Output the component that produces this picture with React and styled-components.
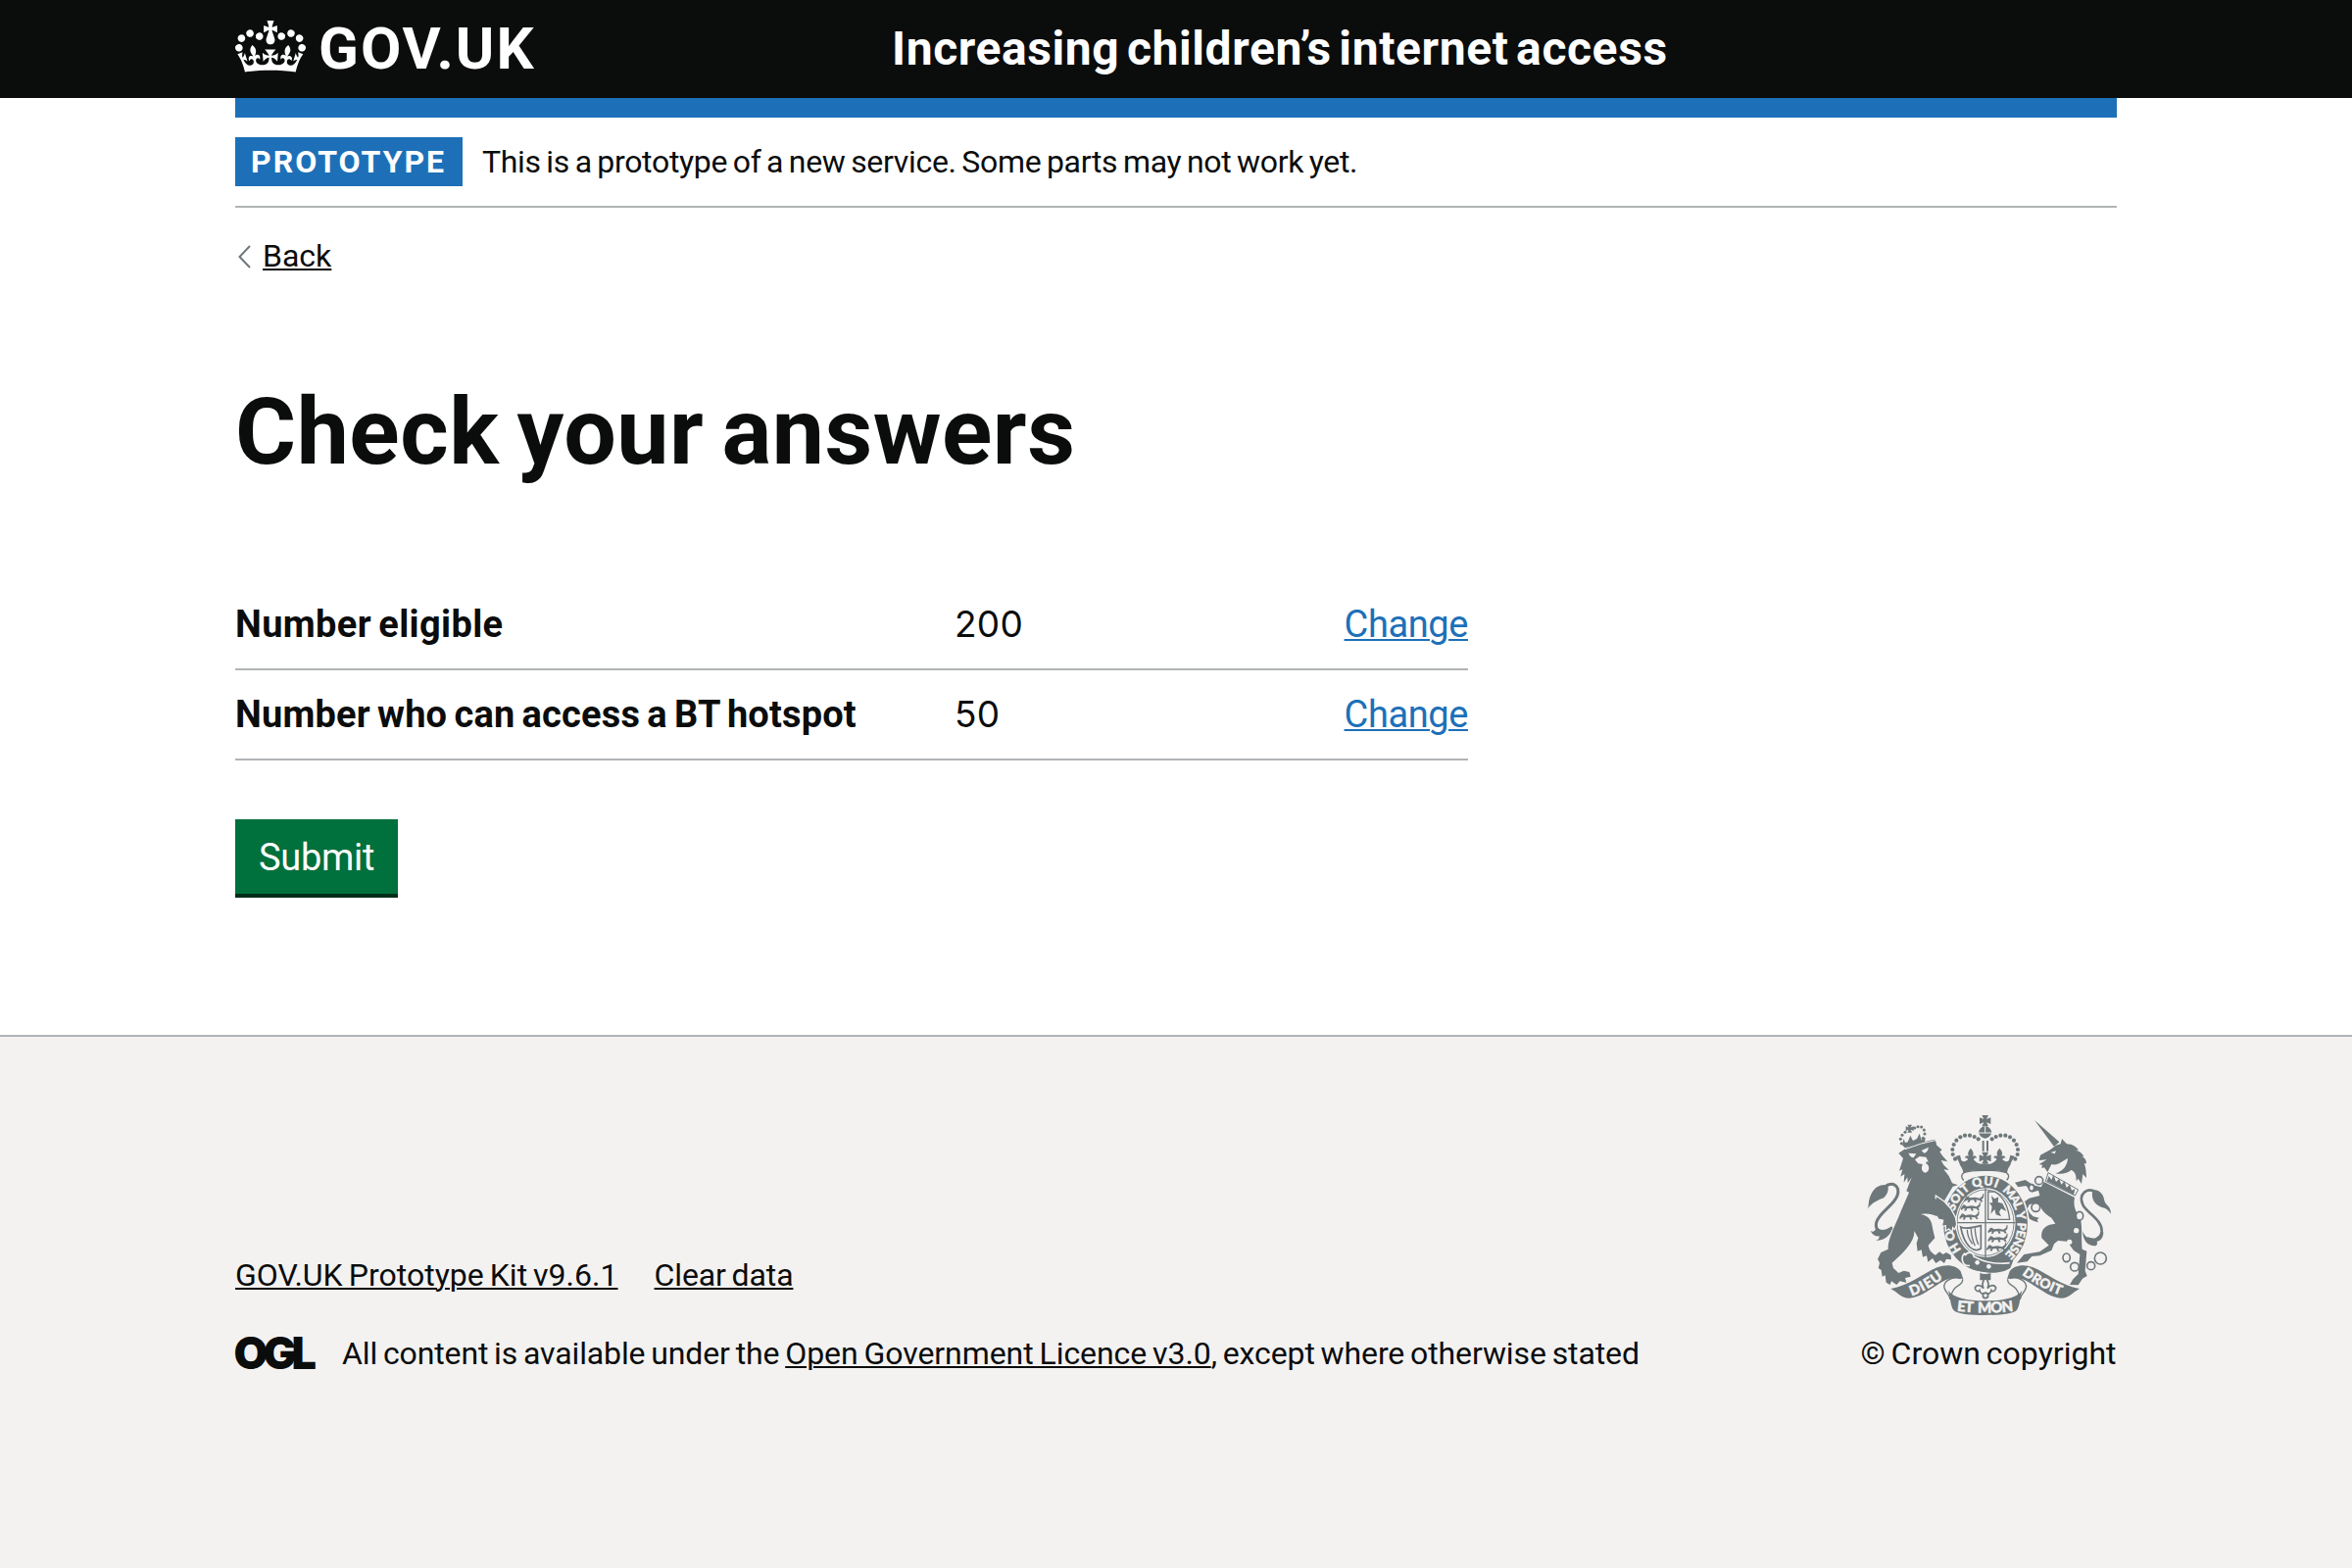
import React from "react";
import styled, { createGlobalStyle } from "styled-components";

const ink = "#0b0c0c";
const blue = "#1d70b8";
const rule = "#b1b4b6";
const shade = "#f3f2f1";
const heraldic = "#6e777a";

const GlobalStyle = createGlobalStyle`
  *, *::before, *::after { box-sizing: border-box; }
  body {
    margin: 0;
    background: #fff;
    color: ${ink};
    font-family: Roboto, "Liberation Sans", sans-serif;
    font-size: 32px;
    line-height: 40px;
    -webkit-font-smoothing: antialiased;
  }
`;

const Page = styled.div`
  display: flex;
  flex-direction: column;
  min-height: 100vh;
`;

const Container = styled.div`
  width: 1920px;
  margin: 0 auto;
`;

/* Fine tracking of a run of text: $track for letters, $words for spaces. */
const Run = styled.span`
  white-space: pre;
  letter-spacing: ${(p) => p.$track || 0}px;
  word-spacing: ${(p) => (p.$words === undefined ? -2 : p.$words)}px;
`;

const Link = styled.a`
  white-space: pre;
  color: ${(p) => p.$color || ink};
  letter-spacing: ${(p) => p.$track || 0}px;
  word-spacing: -2px;
  text-decoration: underline;
  text-decoration-thickness: 2px;
  text-underline-offset: 2px;
`;

const Header = styled.header`
  background: ${ink};
  color: #fff;
`;

const HeaderRow = styled(Container)`
  display: grid;
  grid-template-columns: 670px 1fr;
  align-items: center;
  height: 100px;
`;

const Brand = styled.a`
  display: flex;
  align-items: center;
  gap: 13px;
  color: #fff;
`;

const CrownMark = styled.svg`
  width: 72px;
  height: 53px;
  margin-bottom: 5px;
`;

const Wordmark = styled.span`
  font-size: 60px;
  line-height: 60px;
  font-weight: 700;
  letter-spacing: 2px;
`;

const ServiceName = styled.a`
  font-size: 48px;
  line-height: 60px;
  font-weight: 700;
`;

const BlueBar = styled(Container)`
  height: 20px;
  background: ${blue};
`;

const PhaseBanner = styled(Container)`
  display: flex;
  align-items: center;
  gap: 20px;
  height: 92px;
  padding: 20px 0;
  border-bottom: 2px solid ${rule};
`;

const Tag = styled.strong`
  width: 232px;
  padding-left: 16px;
  background: ${blue};
  color: #fff;
  font-weight: 700;
  line-height: 50px;
  letter-spacing: 2px;
`;

const Main = styled(Container)`
  display: flex;
  flex-direction: column;
  align-items: flex-start;
  padding: 29px 0 144px;
`;

const BackLink = styled.div`
  display: flex;
  align-items: center;
  gap: 11px;
  padding-left: 3px;
`;

const Chevron = styled.svg`
  width: 14px;
  height: 26px;
`;

const Title = styled.h1`
  margin: 110px 0 101px;
  font-size: 95px;
  line-height: 100px;
  font-weight: 700;
`;

const SummaryList = styled.dl`
  width: 1258px;
  margin: 0 0 60px;
  font-size: 38px;
  line-height: 50px;
`;

const SummaryRow = styled.div`
  display: grid;
  grid-template-columns: 734px 1fr auto;
  padding: 20px 0;
  border-bottom: 2px solid ${rule};
`;

const Key = styled.dt`
  font-weight: 700;
`;

const Value = styled.dd`
  margin: 0;
  font-family: Inter, Roboto, sans-serif;
  font-size: 37px;
  letter-spacing: 0.3px;
`;

const Action = styled.dd`
  margin: 0;
`;

const SubmitButton = styled.button`
  width: 166px;
  height: 76px;
  padding: 1px 0 0;
  border: 0;
  background: #00703c;
  box-shadow: 0 4px 0 #002d18;
  color: #fff;
  font: 400 38px/50px Roboto, sans-serif;
  letter-spacing: -0.3px;
`;

const Footer = styled.footer`
  flex: 1;
  border-top: 2px solid ${rule};
  background: ${shade};
`;

const FooterRow = styled(Container)`
  display: flex;
  justify-content: space-between;
  align-items: flex-end;
  padding-top: 80px;
`;

const FooterText = styled.div`
  display: flex;
  flex-direction: column;
  gap: 40px;
`;

const FooterLinks = styled.nav`
  display: flex;
  gap: 37px;
`;

const Licence = styled.div`
  display: flex;
  align-items: center;
  gap: 27px;
`;

const LicenceMark = styled.svg`
  width: 82px;
  height: 36px;
  overflow: visible;
`;

const Copyright = styled.div`
  display: flex;
  flex-direction: column;
  align-items: center;
  gap: 19px;
  width: 262px;
`;

const Arms = styled.svg`
  width: 250px;
  height: 204px;
  overflow: visible;
`;

const answers = [
  { key: "Number eligible", value: "200", track: 0.35 },
  { key: "Number who can access a BT hotspot", value: "50", track: 0.17 },
];

function Crown() {
  return (
    <CrownMark viewBox="0 0 132 97" aria-hidden="true">
      <path
        fill="currentColor"
        fillRule="evenodd"
        d="M25 30.2c3.5 1.5 7.7-.2 9.1-3.7 1.5-3.6-.2-7.8-3.9-9.2-3.6-1.4-7.6.3-9.1 3.9-1.4 3.5.3 7.5 3.9 9zM9 39.5c3.6 1.5 7.8-.2 9.2-3.7 1.5-3.6-.2-7.8-3.9-9.1-3.6-1.5-7.6.2-9.1 3.8-1.4 3.5.3 7.5 3.8 9zM4.4 57.2c3.5 1.5 7.7-.2 9.1-3.8 1.5-3.6-.2-7.7-3.9-9.1-3.5-1.5-7.6.3-9.1 3.8-1.4 3.5.3 7.6 3.9 9.1zm38.3-21.4c3.5 1.5 7.7-.2 9.1-3.8 1.5-3.6-.2-7.7-3.9-9.1-3.6-1.5-7.6.3-9.1 3.8-1.3 3.6.4 7.7 3.9 9.1zm64.4-5.6c-3.6 1.5-7.8-.2-9.1-3.7-1.5-3.6.2-7.8 3.8-9.2 3.6-1.4 7.7.3 9.2 3.9 1.3 3.5-.4 7.5-3.9 9zm15.9 9.3c-3.6 1.5-7.7-.2-9.1-3.7-1.5-3.6.2-7.8 3.7-9.1 3.6-1.5 7.7.2 9.2 3.8 1.5 3.5-.3 7.5-3.8 9zm4.7 17.7c-3.6 1.5-7.8-.2-9.2-3.8-1.5-3.6.2-7.7 3.9-9.1 3.6-1.5 7.7.3 9.2 3.8 1.3 3.5-.4 7.6-3.9 9.1zM89.3 35.8c-3.6 1.5-7.8-.2-9.2-3.8-1.4-3.6.2-7.7 3.9-9.1 3.6-1.5 7.7.3 9.2 3.8 1.4 3.6-.3 7.7-3.9 9.1zM69.7 17.7l8.9 4.7V9.3l-8.9 2.8c-.2-.3-.5-.6-.9-.9L72.4 0H59.6l3.5 11.2c-.3.3-.6.5-.9.9l-8.8-2.8v13.1l8.8-4.7c.3.3.6.7.9.9l-5 15.4v.1c-.2.8-.4 1.6-.4 2.4 0 4.1 3.1 7.5 7 8.1h.2c.3 0 .7.1 1 .1.4 0 .7 0 1-.1h.2c4-.6 7.1-4.1 7.1-8.1 0-.8-.1-1.7-.4-2.4V34l-5.1-15.4c.4-.2.7-.6 1-.9zM66 92.8c16.9 0 32.8 1.1 47.1 3.2 4-16.9 8.9-26.7 14-33.5l-9.6-3.4c1 4.9 1.1 7.2 0 10.2-1.5-1.4-3-4.3-4.2-8.7L108.6 76c2.8-2 5-3.2 7.5-3.3-4.4 9.4-10 11.9-13.6 11.2-4.3-.8-6.3-4.6-5.6-7.9 1-4.7 5.7-5.9 8-.5 4.3-8.7-3-11.4-7.6-8.8 7.1-7.2 7.9-13.5 2.1-21.1-8 6.1-8.1 12.3-4.5 20.8-4.7-5.4-12.1-2.5-9.5 6.2 3.4-5.2 7.9-2 7.2 3.1-.6 4.3-6.4 7.8-13.5 7.2-10.3-.9-10.9-8-11.2-13.8 2.5-.5 7.1 1.8 11 7.3L80.2 60c-4.1 4.4-8 5.3-12.3 5.4 1.4-4.4 8-11.6 8-11.6H55.5s6.4 7.2 7.9 11.6c-4.2-.1-8-1-12.3-5.4l1.4 16.4c3.9-5.5 8.5-7.7 10.9-7.3-.3 5.8-.9 12.8-11.1 13.8-7.2.6-12.9-2.9-13.5-7.2-.7-5 3.8-8.3 7.1-3.1 2.7-8.7-4.6-11.6-9.4-6.2 3.7-8.5 3.6-14.7-4.6-20.8-5.8 7.6-5 13.9 2.2 21.1-4.7-2.6-11.9.1-7.7 8.8 2.3-5.5 7.1-4.2 8.1.5.7 3.3-1.3 7.1-5.7 7.9-3.5.7-9-1.8-13.5-11.2 2.5.1 4.7 1.3 7.5 3.3l-4.7-15.4c-1.2 4.4-2.7 7.2-4.3 8.7-1.1-3-.9-5.3 0-10.2l-9.5 3.4c5 6.9 9.9 16.7 14 33.5 14.8-2.1 30.8-3.2 47.7-3.2z"
      />
    </CrownMark>
  );
}

const archPearls = [
  [345, 188], [338, 174], [337, 159], [341, 144], [349, 131], [361, 121], [375, 116], [390, 116], [404, 120], [416, 127],
];

function CrossPatee({ x, y, s = 1 }) {
  return (
    <path
      transform={`translate(${x} ${y}) scale(${s})`}
      d="M-10-17H10L4-5 17-10V10L4 5 10 17H-10L-4 5-17 10V-10L-4-5Z"
    />
  );
}

function HalfCrown() {
  return (
    <g>
      {archPearls.map(([x, y]) => (
        <circle key={`${x}-${y}`} cx={x} cy={y} r="6.2" />
      ))}
      <path d="M393 155c-8 9-11 16-6 24-6-4-12 0-12 6 4-2 8 0 9 5-6 6-14 8-20 2l-4-16-14 4c6 8 11 16 14 26l8 14h70v-18c-14 4-26 0-36-12 1-5 4-7 9-5 0-6-6-10-12-6 4-8 2-15-6-24Z" />
      <path d="M367 216H438V222Q396 220 370 230Z" />
      <path d="M438 223Q396 222 372 230 358 240 372 254" fill="none" stroke={heraldic} strokeWidth="4" />
    </g>
  );
}

function HalfRibbon() {
  return (
    <g>
      <path d="M148 585C200 578 252 536 290 520 320 508 350 514 362 532L370 556C340 546 312 558 290 574 262 592 232 614 204 614 180 614 172 598 148 585Z" />
      <path
        d="M368 556C370 580 340 568 334 604M362 554C336 546 308 562 312 582 316 598 328 600 330 618"
        fill="none"
        stroke={heraldic}
        strokeWidth="4"
      />
      <path d="M324 590C338 612 380 622 438 622V666C392 666 350 662 340 650 332 640 330 612 324 590Z" />
    </g>
  );
}

/* A small walking lion for the quarterings. */
function Passant({ x, y }) {
  return (
    <path
      transform={`translate(${x} ${y})`}
      d="M0 4L4-2 10-1 14 3 30 1 44 4 52-2 54-10 57-9 56 2 50 8 54 14 49 16 44 10 32 9 36 15 30 17 26 9 16 10 12 17 6 16 10 10 4 10-2 15-4 10Z"
    />
  );
}

function CoatOfArms() {
  return (
    <Arms viewBox="72 54 750 612" fill={heraldic} aria-hidden="true">
      <defs>
        <path id="motto" d="M437 503A99 117 0 0 1 338 386A99 117 0 0 1 437 269A99 117 0 0 1 536 386A99 117 0 0 1 437 503" />
        <path id="scroll-left" d="M212 607Q262 590 316 547" />
        <path id="scroll-right" d="M549 541Q606 584 674 607" />
        <path id="scroll-mid" d="M350 653Q437 664 525 653" />
      </defs>

      {/* royal crown */}
      <CrossPatee x="437" y="71" />
      <path d="M417 108c2-12 8-19 20-20 12 1 18 8 20 20-3 9-10 15-20 17-10-2-17-8-20-17Z" />
      <path d="M415 108h44M437 88v20" stroke={shade} strokeWidth="3" />
      <path d="M431 132v32M444 132v32" stroke={heraldic} strokeWidth="6" />
      <CrossPatee x="437" y="185" s={1.05} />
      <HalfCrown />
      <g transform="translate(874) scale(-1 1)">
        <HalfCrown />
      </g>

      {/* lion */}
      <g>
        {[[181, 140], [178, 127], [183, 115], [192, 106], [221, 93], [231, 89], [242, 90], [250, 99], [252, 111], [247, 124]].map(([x, y]) => (
          <circle key={`${x}-${y}`} cx={x} cy={y} r="4.6" />
        ))}
        <CrossPatee x="206" y="95" s={0.7} />
        <path d="M186 142l-4 2 10 10 60-18 2-14-8 4-4 4-6-20-8 16-12 6-8-16-8 20-8 2-4-12-4 14Z" />
        <path d="M190 158C216 142 250 134 284 128L289 146 305 160 298 166 306 178 322 196 302 192 310 206 326 222 310 220 326 240 336 262 354 268 338 272 312 316 330 332 344 352 350 376 346 404 336 412 328 402 318 408 318 388 308 392 310 374 300 374 299 352 290 364C276 356 262 354 240 357 266 362 274 378 276 400L283 430 263 452C266 468 274 476 285 482L297 472 308 480 318 474 332 482 333 496 318 494 312 507 300 498 286 507 276 492 262 503 258 484 246 488 242 466 230 470 227 446 232 430 220 408C222 440 188 474 152 506L156 522 172 537 188 530 205 534 209 548 192 552 196 566 176 562 166 573 150 562 146 573 134 566 131 544 122 548 119 528 110 522 114 506 108 494 118 474 140 464C138 434 160 396 178 350L204 290 196 286 212 244 200 262 199 244 188 260 190 234 178 242 184 220 174 224 186 186 172 170Z" />
        <g fill={shade}>
          <path d="M202 170l24 2-8 12c-8 0-12-6-16-14ZM242 162l22-10c-2 10-6 16-14 18Z" />
          <path d="M222 190l14-10 20 2 8 16c-6-4-8-2-8 4 12 4 12 26-2 28-12-2-14-16-8-26l-14-2Z" />
        </g>
        <path d="M192 158q50-20 96-28" fill="none" stroke={shade} strokeWidth="3" />
        <path d="M72 346c6-8 8-12 8-20 2-24 12-42 26-52 10-6 22-8 32-6 6 10 0 32-14 40-20 6-38 18-52 38Z" />
        <path
          d="M128 274C154 254 178 270 168 300 158 330 112 352 104 382 98 410 122 418 152 398"
          fill="none"
          stroke={heraldic}
          strokeWidth="9"
        />
        <path d="M86 408c8 4 12 2 16-6 16 10 34 6 52-8-4 22-16 42-52 44 10-4 12-8 10-14-12 2-20-4-26-16Z" />
      </g>

      {/* unicorn */}
      <g>
        <path d="M588 69L664 136 648 150Z" />
        <path d="M672 126L687 142C706 142 716 152 723 160L714 162C728 164 734 172 739 180L732 180C744 184 747 194 747 202L740 202C746 214 746 230 747 246L736 234 732 264 722 248 716 256C716 236 712 226 700 222 688 232 672 236 652 232 676 226 688 208 690 186 672 194 660 210 640 204L628 228 618 214 610 216 612 206 602 204 626 190 602 192 606 176 636 160 654 146 668 142Z" />
        <path d="M638 168l16-5-4 9z" fill={shade} />
        <path d="M630 230L722 282 712 300 622 256Z" fill="none" stroke={heraldic} strokeWidth="3" />
        <path d="M626 256L632 240 640 252 646 236 654 258 664 248 670 266 680 256 686 276 696 266 702 284 712 280 708 298Z" />
        <path d="M617 258L711 306C706 330 712 350 728 366 736 400 730 430 734 464L748 470 743 530 749 546 735 554 722 574 696 573 706 556 722 540 727 480 708 468 688 440 660 438 648 448 640 468 604 484 580 486 566 502 534 506 556 480 604 472 632 452 610 430C606 402 624 388 652 386L640 368C620 356 610 344 606 332 596 324 584 322 572 328L566 340 574 354 584 364 602 368 596 374 600 382 586 378 574 372 556 352 546 326 572 308 604 300 600 284 580 290 562 270 538 274 528 260 560 252 584 268 608 274Z" />
        <path d="M776 290C748 272 722 296 736 328 746 352 794 372 794 408 792 434 770 440 748 430" fill="none" stroke={heraldic} strokeWidth="8" />
        <path d="M766 282c22 0 34 14 36 34 4 14 20 16 20 40-8-12-16-18-28-20-22-8-34-26-28-54ZM735 408c6 16 18 26 34 28l30-26c0 18-8 28-20 30 2 6 2 10-4 14-22 0-38-12-40-46Z" />
        <g fill={shade}>
          <circle cx="716" cy="407" r="8" />
          <circle cx="695" cy="442" r="8" />
        </g>
        <g fill={shade} stroke={heraldic} strokeWidth="5">
          <circle cx="602" cy="254" r="12" />
          <ellipse cx="579" cy="276" rx="8" ry="10" />
          <circle cx="592" cy="336" r="13" />
          <ellipse cx="726" cy="362" rx="11" ry="13" />
        </g>
        <g fill="none" stroke={heraldic} strokeWidth="5">
          <ellipse cx="686" cy="490" rx="11" ry="13" />
          <circle cx="711" cy="518" r="13" />
          <circle cx="761" cy="515" r="12" />
          <circle cx="790" cy="492" r="18" />
        </g>
      </g>

      {/* garter */}
      <ellipse cx="438" cy="386" rx="134" ry="152" fill={shade} />
      <ellipse cx="438" cy="386" rx="129" ry="147" />
      <ellipse cx="438" cy="383" rx="92" ry="106" fill={shade} />
      <ellipse cx="438" cy="383" rx="87" ry="101" fill="none" stroke={heraldic} strokeWidth="2.5" />
      <g fill={shade} stroke={shade} strokeWidth="1.4" fontFamily="Lato, sans-serif" fontWeight="900" fontSize="37">
        <text><textPath href="#motto" startOffset="84" textLength="66">HO</textPath></text>
        <text><textPath href="#motto" startOffset="208" textLength="84">SOIT</textPath></text>
        <text><textPath href="#motto" startOffset="302" textLength="74">QUI</textPath></text>
        <text><textPath href="#motto" startOffset="394" textLength="74">MAL</textPath></text>
        <text><textPath href="#motto" startOffset="474">Y</textPath></text>
        <text><textPath href="#motto" startOffset="506" textLength="108">PENSE</textPath></text>
      </g>

      {/* quarterings */}
      <path d="M438 277v212M346 383h184" stroke={heraldic} strokeWidth="4" />
      <Passant x={376} y={304} />
      <Passant x={366} y={330} />
      <Passant x={362} y={357} />
      <Passant x={449} y={400} />
      <Passant x={449} y={426} />
      <Passant x={445} y={453} />
      <path d="M446 288H466C494 304 508 336 512 373H446Z" fill="none" stroke={heraldic} strokeWidth="4" />
      <path d="M456 300l10 10 12-6-2 16 14 4 12 24-16-8-6 10 6 14-16-6-4-16-12 14 4-22-8-12 10 0Z" />
      <path d="M362 396c14 8 38 2 62-4v70c-20 14-50-4-62-66Z" fill="none" stroke={heraldic} strokeWidth="5" />
      <path d="M382 404c0 16 6 30 16 44M394 402c0 20 4 34 12 52M406 400c0 20 4 34 10 50" fill="none" stroke={heraldic} strokeWidth="4" />

      {/* forepaw over the garter */}
      <path
        d="M286 300L312 318 332 340 346 366 350 388 344 404 338 398 336 412 326 402 316 408 316 392 304 394 308 376 292 372 284 330Z"
        stroke={shade}
        strokeWidth="4"
      />
      <path d="M240 340L284 308 306 330 300 372 290 362 262 354Z" />

      {/* buckle and strap */}
      <path d="M372 492c20-16 34-10 30 4 44 22 90 14 122 0l-10 26c-30 20-90 20-128-6-8 0-20-10-14-24Z" />
      <path d="M400 484c36 24 78 26 112 22M376 476c-16 12-10 42 14 38M404 490c-4-22-24-18-28-6" fill="none" stroke={shade} strokeWidth="5" />
      <circle cx="413" cy="505" r="7" fill={shade} />
      <circle cx="448" cy="517" r="7" fill={shade} />

      {/* badge below the garter */}
      <path d="M421 537q16 6 33 0v22h-33Z" />
      <path
        d="M438 552c-10 10-12 20-6 32-8-12-22-12-26-2 0 10 10 14 14 8 2 10 8 12 18 8 10 4 16 2 18-8 4 6 14 2 14-8-4-10-18-10-26 2 6-12 4-22-6-32Z"
        fill={shade}
        stroke={heraldic}
        strokeWidth="5"
      />
      <circle cx="438" cy="606" r="8" fill={shade} stroke={heraldic} strokeWidth="5" />

      {/* scroll */}
      <HalfRibbon />
      <g transform="translate(874) scale(-1 1)">
        <HalfRibbon />
      </g>
      <g fill={shade} stroke={shade} strokeWidth="1.4" fontFamily="Lato, sans-serif" fontWeight="900">
        <text fontSize="43"><textPath href="#scroll-left" textLength="112">DIEU</textPath></text>
        <text fontSize="41"><textPath href="#scroll-right" textLength="134">DROIT</textPath></text>
        <text fontSize="45" wordSpacing="8"><textPath href="#scroll-mid" textLength="174">ET MON</textPath></text>
      </g>
    </Arms>
  );
}

export default function App() {
  return (
    <Page>
      <GlobalStyle />
      <Header>
        <HeaderRow>
          <Brand>
            <Crown />
            <Wordmark>GOV.UK</Wordmark>
          </Brand>
          <ServiceName>
            <Run $track={0.6} $words={-5}>Increasing children’s internet access</Run>
          </ServiceName>
        </HeaderRow>
      </Header>
      <BlueBar />
      <PhaseBanner>
        <Tag>PROTOTYPE</Tag>
        <Run $track={-0.32}>This is a prototype of a new service. Some parts may not work yet.</Run>
      </PhaseBanner>

      <Main as="main">
        <BackLink>
          <Chevron viewBox="0 0 14 26" aria-hidden="true">
            <path d="M12 3L1.500 14l10.500 11" fill="none" stroke="#6f777b" strokeWidth="2" />
          </Chevron>
          <Link>Back</Link>
        </BackLink>
        <Title>
          <Run $track={0.5} $words={-6}>Check your answers</Run>
        </Title>
        <SummaryList>
          {answers.map(({ key, value, track }) => (
            <SummaryRow key={key}>
              <Key>
                <Run $track={track} $words={-2.4}>{key}</Run>
              </Key>
              <Value>{value}</Value>
              <Action>
                <Link $color={blue} $track={-0.4}>Change</Link>
              </Action>
            </SummaryRow>
          ))}
        </SummaryList>
        <SubmitButton>Submit</SubmitButton>
      </Main>

      <Footer>
        <FooterRow>
          <FooterText>
            <FooterLinks>
              <Link $track={0.02}>GOV.UK Prototype Kit v9.6.1</Link>
              <Link $track={-0.12}>Clear data</Link>
            </FooterLinks>
            <Licence>
              <LicenceMark viewBox="0 0 82 36" role="img" aria-label="Open Government Licence">
                <text
                  x="-1.5"
                  y="34"
                  fill={ink}
                  fontFamily="Inter, sans-serif"
                  fontWeight="900"
                  fontSize="45"
                  textLength="84.500"
                  lengthAdjust="spacing"
                >
                  OGL
                </text>
              </LicenceMark>
              <span>
                <Run $track={-0.12}>{"All content is available under the "}</Run>
                <Link $track={-0.06}>Open Government Licence v3.0</Link>
                <Run $track={-0.11}>, except where otherwise stated</Run>
              </span>
            </Licence>
          </FooterText>
          <Copyright>
            <CoatOfArms />
            <Run>© Crown copyright</Run>
          </Copyright>
        </FooterRow>
      </Footer>
    </Page>
  );
}
